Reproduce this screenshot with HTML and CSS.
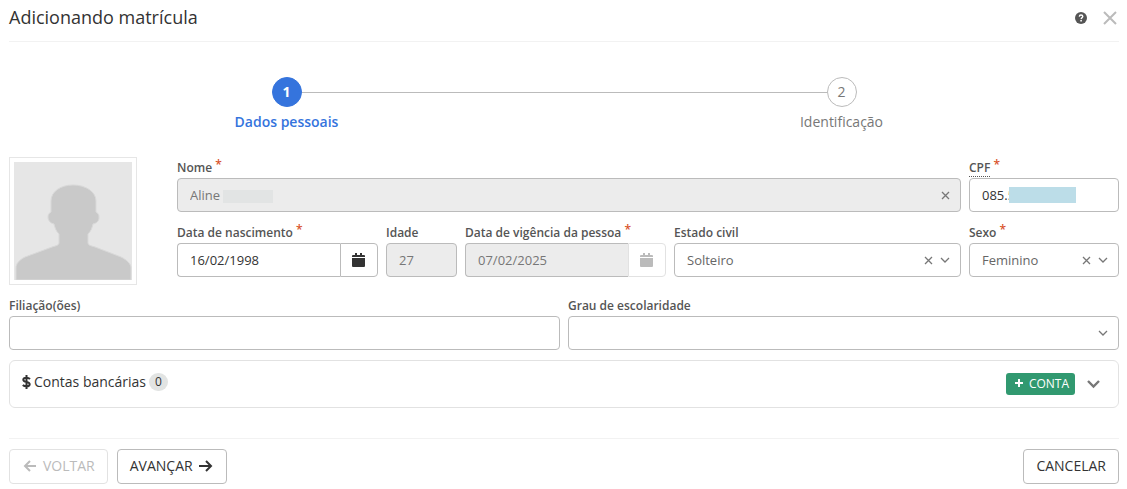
FILE: index.html
```
<!DOCTYPE html>
<html lang="pt-BR">
<head>
    <meta charset="UTF-8">
    <meta name="viewport" content="width=device-width, initial-scale=1.0">
    <title>Adicionando matrícula</title>
    <link rel="stylesheet" href="styles.css">
</head>
<body>
    <header class="modal-header">
        <h1>Adicionando matrícula</h1>
        <div class="header-actions">
            <button type="button" class="icon-btn" aria-label="Ajuda">
                <svg width="12" height="12" viewBox="0 0 12 12">
                    <circle cx="6" cy="6" r="6" fill="#555"/>
                    <path d="M4.300 4.600C4.400 3.500 5.100 3 6 3c1 0 1.800.6 1.800 1.500C7.800 5.600 6.200 5.600 6.200 6.900" fill="none" stroke="#fff" stroke-width="1.400"/>
                    <circle cx="6.100" cy="8.700" r=".9" fill="#fff"/>
                </svg>
            </button>
            <button type="button" class="icon-btn" aria-label="Fechar">
                <svg width="14" height="14" viewBox="0 0 14 14" fill="none" stroke="#bbb" stroke-width="2">
                    <path d="M1 1l12 12M13 1L1 13"/>
                </svg>
            </button>
        </div>
    </header>

    <main>
        <ol class="steps">
            <li class="step active">
                <span class="step-number">1</span>
                <span class="step-title">Dados pessoais</span>
            </li>
            <li class="step">
                <span class="step-number">2</span>
                <span class="step-title">Identificação</span>
            </li>
        </ol>

        <form id="matricula" class="form">
            <div class="person">
                <div class="photo">
                    <svg viewBox="0 0 118 118" role="img" aria-label="Foto">
                        <rect width="118" height="118" fill="#e6e6e6"/>
                        <path d="M2 118v-12c0-4 3-8 9-11l27-10c4-1 7-2 7-4v-9c-3-3-4-6-5-10-4-1-6-4-6-7 0-2 1-4 3-5V39c0-9 9-16 22-16s23 7 23 16v11c2 1 3 3 3 5 0 4-2 6-6 7-1 4-2 7-5 10v9c0 2 3 3 7 4l26 10c6 3 10 7 10 11v12z" fill="#c9c9c9" stroke="#d9d9d9" stroke-width="1"/>
                    </svg>
                </div>
                <div class="fields">
                    <div class="field nome">
                        <label for="nome">Nome <span class="required">*</span></label>
                        <div class="control">
                            <input type="text" id="nome" value="Aline" readonly class="locked">
                            <span class="mask mask-nome"></span>
                            <div class="control-icons">
                                <button type="button" class="icon-btn" aria-label="Limpar nome">
                                    <svg width="9" height="9" viewBox="0 0 9 9"><path d="M1 1l7 7M8 1L1 8"/></svg>
                                </button>
                            </div>
                        </div>
                    </div>
                    <div class="field">
                        <label for="cpf"><abbr title="Cadastro de Pessoas Físicas">CPF</abbr> <span class="required">*</span></label>
                        <div class="control">
                            <input type="text" id="cpf" value="085.5">
                            <span class="mask mask-cpf"></span>
                        </div>
                    </div>
                    <div class="field">
                        <label for="nascimento">Data de nascimento <span class="required">*</span></label>
                        <div class="date">
                            <input type="text" id="nascimento" value="16/02/1998">
                            <button type="button" aria-label="Abrir calendário">
                                <svg width="13" height="15" viewBox="0 0 13 15"><path d="M3 0h2v2h3V0h2v2h2q1 0 1 1v1H0V3q0-1 1-1h2zM0 5h13v8q0 1-1 1H1q-1 0-1-1z"/></svg>
                            </button>
                        </div>
                    </div>
                    <div class="field">
                        <label for="idade">Idade</label>
                        <input type="text" id="idade" value="27" disabled>
                    </div>
                    <div class="field">
                        <label for="vigencia">Data de vigência da pessoa <span class="required">*</span></label>
                        <div class="date">
                            <input type="text" id="vigencia" value="07/02/2025" disabled>
                            <button type="button" aria-label="Abrir calendário" disabled>
                                <svg width="13" height="15" viewBox="0 0 13 15"><path d="M3 0h2v2h3V0h2v2h2q1 0 1 1v1H0V3q0-1 1-1h2zM0 5h13v8q0 1-1 1H1q-1 0-1-1z"/></svg>
                            </button>
                        </div>
                    </div>
                    <div class="field">
                        <label for="estado-civil">Estado civil</label>
                        <div class="control">
                            <select id="estado-civil">
                                <option>Solteiro</option>
                            </select>
                            <div class="control-icons">
                                <button type="button" class="icon-btn" aria-label="Limpar estado civil">
                                    <svg width="9" height="9" viewBox="0 0 9 9"><path d="M1 1l7 7M8 1L1 8"/></svg>
                                </button>
                                <svg width="10" height="6" viewBox="0 0 10 6"><path d="M1 1l4 4 4-4"/></svg>
                            </div>
                        </div>
                    </div>
                    <div class="field">
                        <label for="sexo">Sexo <span class="required">*</span></label>
                        <div class="control">
                            <select id="sexo">
                                <option>Feminino</option>
                            </select>
                            <div class="control-icons">
                                <button type="button" class="icon-btn" aria-label="Limpar sexo">
                                    <svg width="9" height="9" viewBox="0 0 9 9"><path d="M1 1l7 7M8 1L1 8"/></svg>
                                </button>
                                <svg width="10" height="6" viewBox="0 0 10 6"><path d="M1 1l4 4 4-4"/></svg>
                            </div>
                        </div>
                    </div>
                </div>
            </div>

            <div class="halves">
                <div class="field">
                    <label for="filiacao">Filiação(ões)</label>
                    <input type="text" id="filiacao">
                </div>
                <div class="field">
                    <label for="escolaridade">Grau de escolaridade</label>
                    <div class="control">
                        <select id="escolaridade">
                            <option></option>
                        </select>
                        <div class="control-icons">
                            <svg width="10" height="6" viewBox="0 0 10 6"><path d="M1 1l4 4 4-4"/></svg>
                        </div>
                    </div>
                </div>
            </div>

            <section class="panel">
                <h2>
                    <svg width="9" height="14" viewBox="0 0 9 14" fill="none" stroke="#333" stroke-width="2"><path d="M4.500 0v14M8 4C7 3 6 2.700 4.500 2.700 2.500 2.700 1.300 3.500 1.300 4.700c0 3 6.400 1.500 6.400 4.500 0 1.300-1.200 2.100-3.200 2.100C3 11.300 1.800 11 .8 10"/></svg>
                    Contas bancárias
                    <span class="badge">0</span>
                </h2>
                <div class="panel-actions">
                    <button type="button" class="btn-add">
                        <svg width="10" height="10" viewBox="0 0 10 10" stroke="#fff" stroke-width="2"><path d="M5 1v8M1 5h8"/></svg>
                        CONTA
                    </button>
                    <button type="button" class="icon-btn" aria-label="Expandir">
                        <svg width="13" height="9" viewBox="0 0 13 9" fill="none" stroke="#777" stroke-width="2.400"><path d="M1 1l5.500 5.500L12 1"/></svg>
                    </button>
                </div>
            </section>
        </form>
    </main>

    <footer class="modal-footer">
        <button type="button" class="btn" disabled>
            <svg width="15" height="12" viewBox="0 0 15 12"><path d="M14 6H3M8 1L3 6l5 5"/></svg>
            VOLTAR
        </button>
        <button type="submit" form="matricula" class="btn">
            AVANÇAR
            <svg width="15" height="12" viewBox="0 0 15 12"><path d="M0 6h12M7 1l5 5-5 5"/></svg>
        </button>
        <button type="button" class="btn btn-cancel">CANCELAR</button>
    </footer>
</body>
</html>
```
FILE: styles.css
```
* {
    box-sizing: border-box;
}

body {
    margin: 0;
    padding: 0 8px 0 9px;
    background: #fff;
    color: #333;
    font-family: "Open Sans", "Noto Sans", sans-serif;
    font-size: 14px;
}

button,
input,
select {
    font-family: inherit;
    font-size: 13px;
    color: #333;
}

svg {
    display: block;
    flex: none;
}

.icon-btn {
    border: 0;
    padding: 0;
    background: none;
    cursor: pointer;
}

/* Header */
.modal-header {
    display: flex;
    align-items: center;
    justify-content: space-between;
    height: 42px;
    padding-bottom: 6px;
    border-bottom: 1px solid #f2f2f2;
}

.modal-header h1 {
    margin: 0;
    padding-bottom: 2px;
    font-size: 18px;
    font-weight: 400;
}

.header-actions {
    display: flex;
    align-items: center;
    gap: 16px;
    padding-right: 2px;
}

/* Steps */
.steps {
    display: grid;
    grid-template-columns: 1fr 1fr;
    margin: 0;
    padding: 35px 0 0;
    list-style: none;
}

.step {
    position: relative;
    display: flex;
    flex-direction: column;
    align-items: center;
    gap: 5px;
    color: #777;
}

.step-number {
    position: relative;
    width: 30px;
    height: 30px;
    border: 1px solid #bbb;
    border-radius: 50%;
    background: #fff;
    line-height: 28px;
    text-align: center;
}

.step-title {
    line-height: 20px;
}

.step + .step::before {
    content: "";
    position: absolute;
    top: 15px;
    left: -50%;
    width: 100%;
    border-top: 1px solid #bbb;
}

.step.active {
    z-index: 1;
    color: #3574dd;
    font-weight: 600;
}

.step.active .step-number {
    border-color: #3574dd;
    background: #3574dd;
    color: #fff;
    font-weight: 700;
}

/* Form */
.form {
    display: flex;
    flex-direction: column;
    gap: 10px;
    margin-top: 25px;
}

.person {
    display: flex;
    align-items: flex-start;
    gap: 40px;
}

.photo {
    flex: none;
    width: 128px;
    padding: 4px;
    border: 1px solid #e6e6e6;
}

.fields {
    flex: 1;
    display: grid;
    grid-template-columns: 201fr 71fr 201fr 287fr 150fr;
    gap: 10px 8px;
}

.nome {
    grid-column: span 4;
}

.halves {
    display: grid;
    grid-template-columns: 1fr 1fr;
    gap: 8px;
}

.field {
    min-width: 0;
}

.field label {
    display: block;
    height: 21px;
    color: #555;
    font-size: 12px;
    font-weight: 600;
    line-height: 21px;
    white-space: nowrap;
}

.field abbr {
    display: inline-block;
    height: 20px;
    border-bottom: 1px dotted #555;
    text-decoration: none;
    vertical-align: top;
}

.required {
    color: #d9532c;
    font-size: 12px;
    line-height: 12px;
    vertical-align: 3px;
}

.field input,
.field select {
    display: block;
    width: 100%;
    height: 34px;
    padding: 0 12px;
    border: 1px solid #bbb;
    border-radius: 4px;
    background: #fff;
    appearance: none;
}

.field select {
    color: #666;
}

.field input:disabled,
.field input.locked {
    background: #ececec;
    color: #777;
}

.control {
    position: relative;
}

.control-icons {
    position: absolute;
    top: 0;
    right: 11px;
    display: flex;
    align-items: center;
    gap: 7px;
    height: 34px;
    pointer-events: none;
}

.control-icons .icon-btn {
    pointer-events: auto;
}

.control-icons path {
    fill: none;
    stroke: #777;
    stroke-width: 1.3;
}

.mask {
    position: absolute;
}

.mask-nome {
    top: 12px;
    left: 46px;
    width: 50px;
    height: 13px;
    background: #e2e4e4;
}

.mask-cpf {
    top: 9px;
    left: 40px;
    width: 67px;
    height: 16px;
    background: #bcdde8;
}

.date {
    display: flex;
}

.date input {
    flex: 1;
    min-width: 0;
    border-right: 0;
    border-radius: 4px 0 0 4px;
}

.date button {
    display: flex;
    align-items: center;
    justify-content: center;
    width: 38px;
    padding: 0 2px 0 0;
    border: 1px solid #bbb;
    border-radius: 0 4px 4px 0;
    background: #fff;
    fill: #333;
}

.date button:disabled {
    border-color: #e2e2e2;
    fill: #bbb;
}

/* Bank accounts */
.panel {
    display: flex;
    align-items: flex-start;
    justify-content: space-between;
    height: 48px;
    padding: 12px 18px 0 12px;
    border: 1px solid #e2e2e2;
    border-radius: 6px;
}

.panel h2 {
    display: flex;
    align-items: center;
    gap: 3px;
    margin: 0;
    font-size: 14px;
    font-weight: 400;
    line-height: 16px;
}

.badge {
    min-width: 19px;
    border-radius: 9px;
    background: #e2e4e3;
    font-size: 12px;
    line-height: 18px;
    text-align: center;
}

.panel-actions {
    display: flex;
    align-items: center;
    gap: 12px;
}

.btn-add {
    display: flex;
    align-items: center;
    gap: 5px;
    height: 22px;
    padding: 0 6px 2px 8px;
    border: 0;
    border-radius: 3px;
    background: #319970;
    color: #fff;
    font-size: 12px;
}

/* Footer */
.modal-footer {
    display: flex;
    gap: 9px;
    margin-top: 30px;
    padding: 10px 0 4px;
    border-top: 1px solid #f2f2f2;
}

.btn {
    display: flex;
    align-items: center;
    justify-content: center;
    gap: 6px;
    height: 35px;
    padding: 0 12px 2px;
    border: 1px solid #bbb;
    border-radius: 4px;
    background: #fff;
    font-size: 14px;
}

.btn path {
    fill: none;
    stroke: #333;
    stroke-width: 2;
}

.btn:disabled {
    border-color: #e2e2e2;
    color: #bbb;
}

.btn:disabled path {
    stroke: #bbb;
}

.btn-cancel {
    margin-left: auto;
}
```
